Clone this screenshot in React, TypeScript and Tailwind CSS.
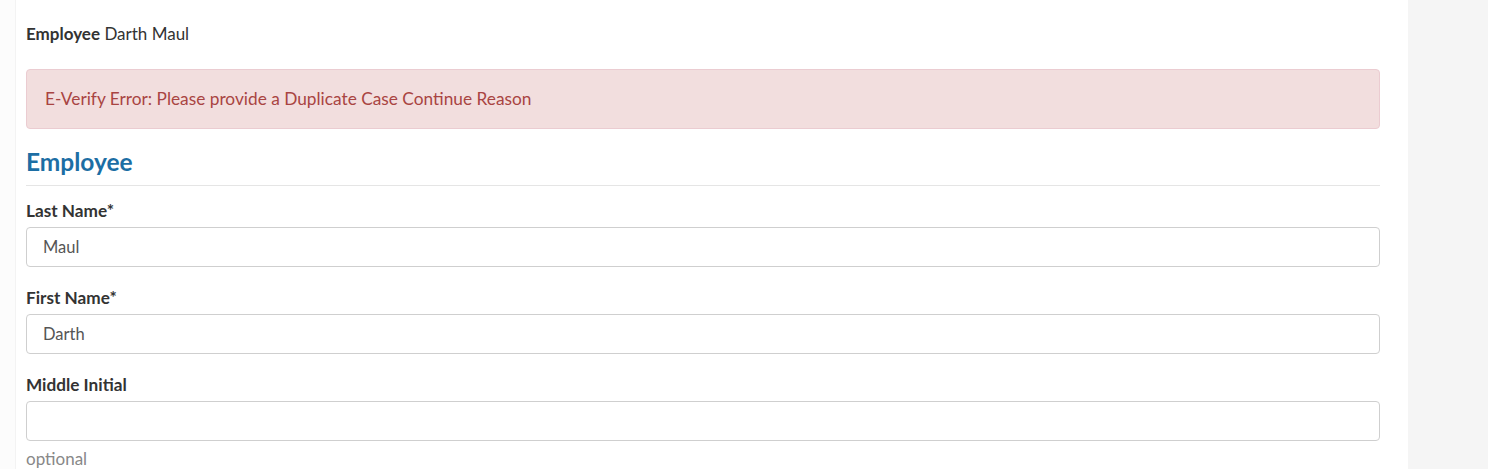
export default function App() {
  const fields = [
    { label: "Last Name*", value: "Maul" },
    { label: "First Name*", value: "Darth" },
    { label: "Middle Initial", value: "", hint: "optional" },
  ];

  return (
    <div className="flex h-[469px] w-full overflow-hidden bg-white font-['Lato','Noto_Sans',sans-serif] text-[#333]">
      <div className="w-[16px] shrink-0 bg-[#fcfcfc] border-r border-[#f3f3f3]" />
      <main className="flex-1 pl-[10px] pr-[28px] pt-[25px]">
        <p className="text-[17px] leading-[18px]">
          <span className="font-bold">Employee</span> Darth Maul
        </p>
        <div className="mt-[26px] h-[60px] flex items-center rounded-[4px] border border-[#ebccd1] bg-[#f2dede] px-[18px] text-[17.3px] text-[#a94442]">
          E-Verify Error: Please provide a Duplicate Case Continue Reason
        </div>
        <h2 className="mt-[19px] pb-[9px] border-b border-[#e5e5e5] text-[24.5px] leading-[28px] font-bold text-[#1c6ea4]">
          Employee
        </h2>
        <div className="mt-[16px] flex flex-col">
          {fields.map((f) => (
            <div key={f.label} className="mb-[22px]">
              <label className="block text-[17.2px] leading-[18px] font-bold">
                {f.label}
              </label>
              <input
                readOnly
                value={f.value}
                className="mt-[7px] block w-full h-[40px] rounded-[4px] border border-[#cfcfcf] bg-white px-[16px] text-[16.5px] text-[#555] outline-none"
              />
              {f.hint && (
                <p className="mt-[9px] text-[17px] leading-[18px] text-[#888]">{f.hint}</p>
              )}
            </div>
          ))}
        </div>
      </main>
      <aside className="w-[80px] shrink-0 bg-[#f5f5f5]" />
    </div>
  );
}
